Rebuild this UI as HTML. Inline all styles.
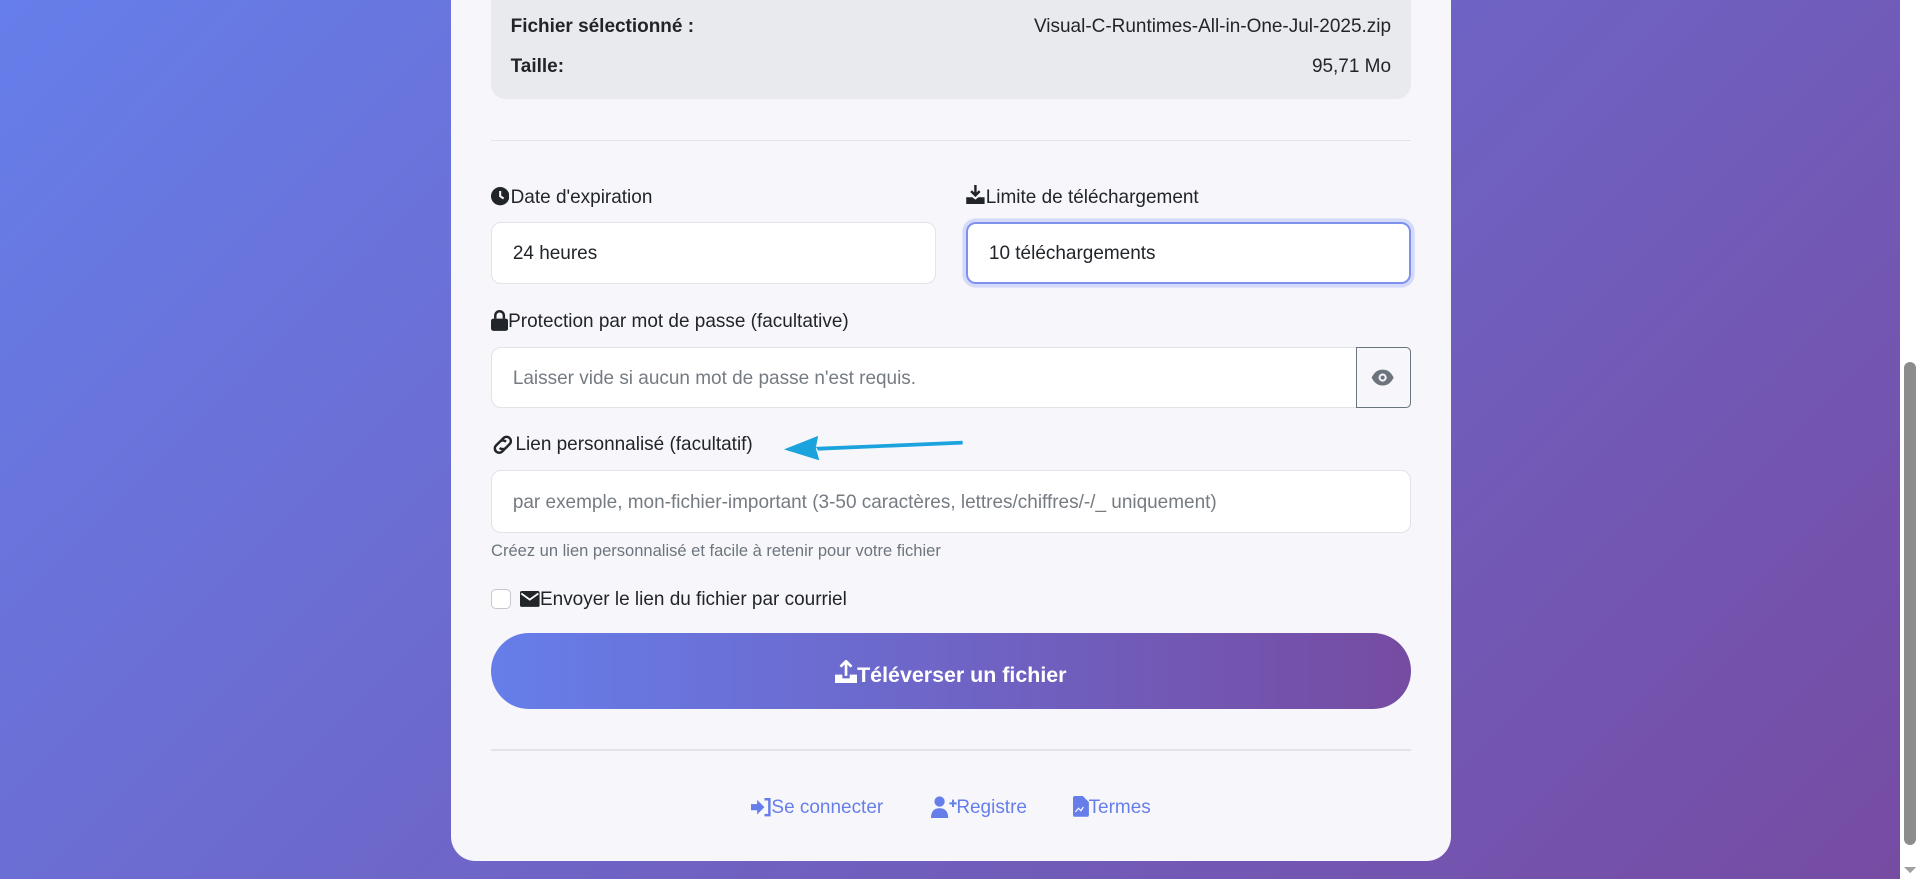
<!DOCTYPE html>
<html><head><meta charset="utf-8"><style>
html{zoom:1.22449}
body{margin:0;width:1568px;height:718px;overflow:hidden;position:relative;font-family:"Liberation Sans",sans-serif;background:linear-gradient(135deg,#667eea 0%,#764ba2 100%);}
.a{position:absolute}
.card{left:368px;top:-30px;width:817px;height:733px;background:#f7f7fb;border-radius:20px}
.info{left:401px;top:-20px;width:751px;height:101px;background:#e9eaee;border-radius:12px}
.t{font-size:15.5px;color:#212529;line-height:20px;white-space:nowrap}
.b{font-weight:bold}
.hr{left:401px;width:751px;height:1px;background:#e2e4e9}
.in{background:#fff;border:1px solid #e1e3e8;border-radius:8px;box-sizing:border-box}
.ph{color:#757b82}
.lnk{color:#667eea;font-size:15.5px}
</style></head><body>
<div class="a card"></div>
<div class="a info"></div>
<div class="a t b" style="left:417px;top:12px">Fichier sélectionné :</div>
<div class="a t" style="right:432px;top:12px">Visual-C-Runtimes-All-in-One-Jul-2025.zip</div>
<div class="a t b" style="left:417px;top:45px">Taille:</div>
<div class="a t" style="right:432px;top:45px">95,71 Mo</div>
<div class="a hr" style="top:114px"></div>

<svg class="a" style="left:401px;top:153px" width="15" height="15" viewBox="0 0 16 16"><circle cx="8" cy="8" r="8" fill="#212529"/><path d="M8 3.5V8l3 2" stroke="#f7f7fb" stroke-width="1.8" fill="none"/></svg>
<div class="a t" style="left:417px;top:152px">Date d'expiration</div>
<svg class="a" style="left:788px;top:151px" width="17" height="16" viewBox="0 0 17 16"><path d="M8.5 0v8M5 5l3.5 3.5L12 5" stroke="#212529" stroke-width="2" fill="none"/><path d="M1 10h5l2.5 2 2.5-2h5v6H1z" fill="#212529"/></svg>
<div class="a t" style="left:805px;top:152px">Limite de téléchargement</div>
<div class="a in t" style="left:401px;top:181px;width:363px;height:51px;padding:16px 17px">24 heures</div>
<div class="a in t" style="left:789px;top:181px;width:363px;height:51px;padding:15px 17px;border:2px solid #7f91ee;box-shadow:0 0 0 3px #d4dafa">10 téléchargements</div>

<svg class="a" style="left:401px;top:253px" width="14" height="17" viewBox="0 0 14 17"><path d="M3.5 7V4.5a3.5 3.5 0 0 1 7 0V7" stroke="#212529" stroke-width="2" fill="none"/><rect x="0" y="7" width="14" height="10" rx="2" fill="#212529"/></svg>
<div class="a t" style="left:415px;top:253px">Protection par mot de passe (facultative)</div>
<div class="a in t ph" style="left:401px;top:283px;width:707px;height:50px;padding:16px 17px;border-radius:8px 0 0 8px">Laisser vide si aucun mot de passe n'est requis.</div>
<div class="a" style="left:1107px;top:283px;width:45px;height:50px;box-sizing:border-box;border:1px solid #6c757d;border-radius:0 4px 4px 0;background:#f7f7fb"></div>
<svg class="a" style="left:1120px;top:301px" width="19" height="14" viewBox="0 0 19 14"><path d="M0.5 7C3 2 6 0.5 9.5 0.5S16 2 18.5 7C16 12 13 13.5 9.5 13.5S3 12 0.5 7z" fill="#6c757d"/><circle cx="9.5" cy="7" r="3.3" fill="#f7f7fb"/><circle cx="9.5" cy="7" r="1.7" fill="#6c757d"/></svg>

<svg class="a" style="left:400px;top:355px" width="21" height="16" viewBox="0 0 21 16"><path d="M9 4.5L11 2.5a3.5 3.5 0 0 1 5 5l-3 3a3.5 3.5 0 0 1-5 0M12 11.5L10 13.5a3.5 3.5 0 0 1-5-5l3-3a3.5 3.5 0 0 1 5 0" stroke="#212529" stroke-width="2" fill="none"/></svg>
<div class="a t" style="left:421px;top:354px">Lien personnalisé (facultatif)</div>
<svg class="a" style="left:636px;top:352px" width="155" height="24" viewBox="0 0 155 24"><path d="M150 8 L30 13 L32 16 L150 11z" fill="#1aa3dc"/><path d="M4 15 L32 4 L30 14 L33 24z" fill="#1aa3dc"/></svg>
<div class="a in t ph" style="left:401px;top:384px;width:751px;height:51px;padding:16px 17px">par exemple, mon-fichier-important (3-50 caractères, lettres/chiffres/-/_ uniquement)</div>
<div class="a" style="left:401px;top:441px;font-size:13.5px;color:#6c757d;line-height:18px">Créez un lien personnalisé et facile à retenir pour votre fichier</div>

<div class="a" style="left:401px;top:481px;width:16px;height:16px;box-sizing:border-box;border:1px solid #c5c9cf;border-radius:4px;background:#fff"></div>
<svg class="a" style="left:425px;top:483px" width="16" height="13" viewBox="0 0 16 13"><rect width="16" height="13" rx="1.5" fill="#212529"/><path d="M1 2l7 5 7-5" stroke="#f7f7fb" stroke-width="1.5" fill="none"/></svg>
<div class="a t" style="left:441px;top:480px">Envoyer le lien du fichier par courriel</div>

<div class="a" style="left:401px;top:517px;width:751px;height:62px;border-radius:31px;background:linear-gradient(90deg,#667eea,#764ba2)"></div>
<div class="a" style="left:401px;top:539px;width:751px;text-align:center;color:#fff;font-weight:bold;font-size:17.5px;line-height:22px"><svg width="18" height="19" viewBox="0 0 18 19" style="vertical-align:-1px"><path d="M9 13V1M4.5 5.5L9 1l4.5 4.5" stroke="#fff" stroke-width="2.2" fill="none"/><path d="M0 12h6v3h6v-3h6v7H0z" fill="#fff"/></svg>Téléverser un fichier</div>

<div class="a hr" style="top:612px"></div>

<svg class="a" style="left:613px;top:652px" width="17" height="15" viewBox="0 0 17 15"><path d="M0 5h5V1.5L11 7.5 5 13.5V10H0z" fill="#667eea"/><path d="M11 1h4v13h-4" stroke="#667eea" stroke-width="2" fill="none"/></svg>
<div class="a lnk" style="left:630px;top:651px">Se connecter</div>
<svg class="a" style="left:760px;top:650px" width="22" height="18" viewBox="0 0 22 18"><circle cx="7" cy="4.5" r="4.2" fill="#667eea"/><path d="M0 18c0-6 3-8 7-8s7 2 7 8z" fill="#667eea"/><path d="M18 3v6M15 6h6" stroke="#667eea" stroke-width="1.6"/></svg>
<div class="a lnk" style="left:781px;top:651px">Registre</div>
<svg class="a" style="left:876px;top:650px" width="13" height="17" viewBox="0 0 13 17"><path d="M0 1.5A1.5 1.5 0 0 1 1.5 0H8l5 5v10.5a1.5 1.5 0 0 1-1.5 1.5h-10A1.5 1.5 0 0 1 0 15.5z" fill="#667eea"/><path d="M2 13l2.5-3 2 2 2-3" stroke="#fff" stroke-width="1" fill="none"/></svg>
<div class="a lnk" style="left:889px;top:651px">Termes</div>

<div class="a" style="left:1552px;top:0;width:16px;height:718px;background:#fff"></div>
<div class="a" style="left:1555px;top:296px;width:10px;height:394px;border-radius:5px;background:#8c8c8c"></div>
<svg class="a" style="left:1555px;top:708px" width="10" height="6" viewBox="0 0 10 6"><path d="M0 0h10L5 5z" fill="#a0a0a0"/></svg>
</body></html>
